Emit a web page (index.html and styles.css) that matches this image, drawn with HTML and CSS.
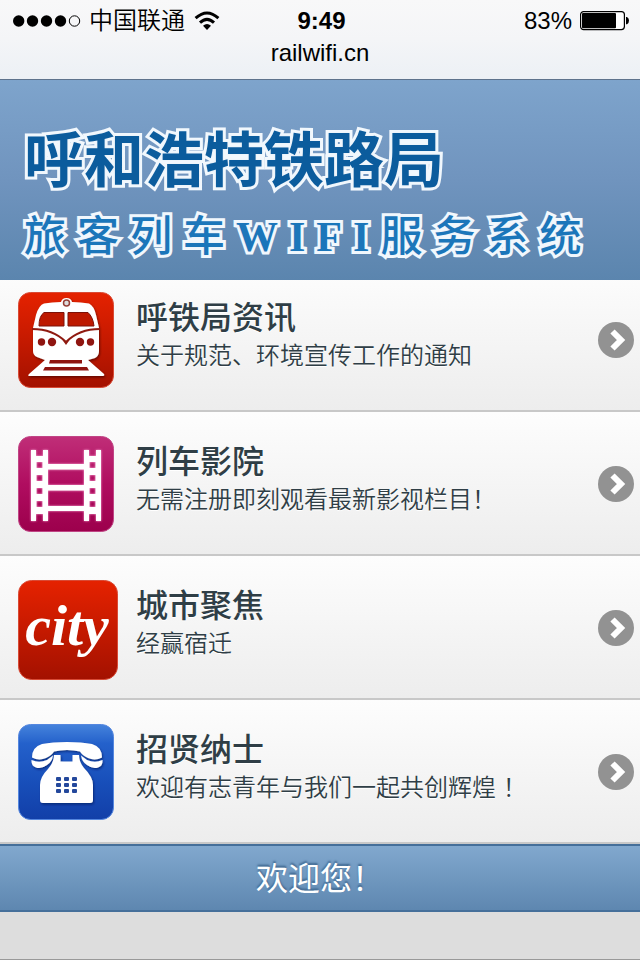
FILE: index.html
```
<!DOCTYPE html>
<html lang="zh-CN">
<head>
    <meta charset="UTF-8">
    <meta name="viewport" content="width=device-width, initial-scale=1.0">
    <title>呼和浩特铁路局</title>
    <link rel="stylesheet" href="styles.css">
</head>
<body>
    <div class="browser-bar">
        <div class="status">
            <div class="carrier">
                <svg class="signal" width="68" height="14" viewBox="0 0 68 14">
                    <circle cx="5.700" cy="7" r="5.700"/>
                    <circle cx="19.500" cy="7" r="5.700"/>
                    <circle cx="33.500" cy="7" r="5.700"/>
                    <circle cx="47.500" cy="7" r="5.700"/>
                    <circle cx="61.500" cy="7" r="5.200" fill="none" stroke="#000"/>
                </svg>
                <span>中国联通</span>
                <svg class="wifi" width="26" height="20" viewBox="0 0 26 20">
                    <path d="M1.6 7.2Q13-3.2 24.4 7.2M6 11.6Q13 5 20 11.6" fill="none" stroke="#000" stroke-width="3"/>
                    <path d="M9 14.8Q13 11.4 17 14.8L13 19Z"/>
                </svg>
            </div>
            <strong class="time">9:49</strong>
            <div class="power">
                <span>83%</span>
                <svg width="50" height="20" viewBox="0 0 50 20">
                    <rect x="0.6" y="0.6" width="43.8" height="18" rx="3" fill="#fff" stroke="#000" stroke-width="1.2"/>
                    <rect x="2" y="2" width="34" height="15.2" rx="1"/>
                    <path d="M46 6h1q2 1 2 3.6t-2 3.6h-1z"/>
                </svg>
            </div>
        </div>
        <div class="address">railwifi.cn</div>
    </div>

    <header class="banner">
        <h1>呼和浩特铁路局</h1>
        <p>旅客列车<b>WIFI</b>服务系统</p>
    </header>

    <ul class="menu">
        <li>
            <a href="#news">
                <span class="thumb">
                    <svg width="96" height="96" viewBox="0 0 96 96">
                        <defs>
                            <linearGradient id="red" x1="0" y1="0" x2="0" y2="1">
                                <stop offset="0" stop-color="#e52200"/>
                                <stop offset="0.35" stop-color="#cf1c00"/>
                                <stop offset="1" stop-color="#a31100"/>
                            </linearGradient>
                            <filter id="drop" x="-10%" y="-10%" width="125%" height="125%">
                                <feDropShadow dx="1" dy="1.5" stdDeviation="1" flood-color="#300" flood-opacity="0.6"/>
                            </filter>
                        </defs>
                        <rect x="0.5" y="0.5" width="95" height="95" rx="12" fill="url(#red)" stroke="#d94a35"/>
                        <g filter="url(#drop)">
                            <path fill="#fff" d="M26 11.500Q34 10 43 10Q44 6 48.500 6T54 10Q63 10 71 11.500Q76 14 78 23L81 36V59Q81 64 77 66L70 68L86 82Q87 84 84 84H12Q9 84 11 82L27 68L19 65Q15 63 15 59V36L18 23Q21 13 26 11.500Z"/>
                        </g>
                        <path fill="#bd1900" stroke="#7c1208" stroke-width="1" d="M26 20.500H46V34H21Q21 24 26 20.500ZM50 20.500H70Q75 25 76 34H50Z"/>
                        <circle cx="48.500" cy="11" r="3" fill="#ddd" stroke="#964038" stroke-width="1.500"/>
                        <path d="M14 37Q35 37 48 50Q61 37 82 37" fill="none" stroke="#8f1a10" stroke-width="2"/>
                        <path d="M43 46L48 53L53 46L48 50Z" fill="#8f1a10"/>
                        <g fill="#8f1510">
                            <circle cx="23.500" cy="50" r="3.700"/>
                            <circle cx="34" cy="50" r="4.200"/>
                            <circle cx="62" cy="50" r="4.200"/>
                            <circle cx="72.500" cy="50" r="3.700"/>
                            <path d="M32 68H64V71.500H31ZM27 75H69L71 78.500H25Z"/>
                        </g>
                    </svg>
                </span>
                <span class="text">
                    <span class="title">呼铁局资讯</span>
                    <span class="desc">关于规范、环境宣传工作的通知</span>
                </span>
                <svg class="arrow" width="36" height="36" viewBox="0 0 36 36">
                    <circle cx="18" cy="18" r="18"/>
                    <path d="M14.500 9.500L23 18L14.500 26.500"/>
                </svg>
            </a>
        </li>
        <li>
            <a href="#cinema">
                <span class="thumb">
                    <svg width="96" height="96" viewBox="0 0 96 96">
                        <defs>
                            <linearGradient id="pink" x1="0" y1="0" x2="0" y2="1">
                                <stop offset="0" stop-color="#c02e78"/>
                                <stop offset="0.5" stop-color="#b00d60"/>
                                <stop offset="1" stop-color="#9c004c"/>
                            </linearGradient>
                            <filter id="glow">
                                <feDropShadow dx="0" dy="0" stdDeviation="1.2" flood-color="#ffb0dd"/>
                            </filter>
                        </defs>
                        <rect x="0.5" y="0.5" width="95" height="95" rx="12" fill="url(#pink)" stroke="#c04585"/>
                        <g fill="#fff" filter="url(#glow)">
                            <path fill-rule="evenodd" d="M13 14H18V20H25V14H30V85H25V78H18V85H13ZM18.500 26V32H24.500V26ZM18.500 39V45H24.500V39ZM18.500 52V58H24.500V52ZM18.500 65V71H24.500V65Z"/>
                            <path fill-rule="evenodd" d="M66 14H71V20H78V14H83V85H78V78H71V85H66ZM71.500 26V32H77.500V26ZM71.500 39V45H77.500V39ZM71.500 52V58H77.500V52ZM71.500 65V71H77.500V65Z"/>
                            <path d="M29 28H67V33.500H29ZM29 49H67V54.500H29ZM29 70H67V75H29Z"/>
                        </g>
                    </svg>
                </span>
                <span class="text">
                    <span class="title">列车影院</span>
                    <span class="desc">无需注册即刻观看最新影视栏目！</span>
                </span>
                <svg class="arrow" width="36" height="36" viewBox="0 0 36 36">
                    <circle cx="18" cy="18" r="18"/>
                    <path d="M14.500 9.500L23 18L14.500 26.500"/>
                </svg>
            </a>
        </li>
        <li>
            <a href="#city">
                <span class="thumb">
                    <svg width="100" height="100" viewBox="0 0 100 100">
                        <rect x="0.5" y="0.5" width="99" height="99" rx="13" fill="url(#red)" stroke="#d94a35"/>
                        <text class="city" x="49" y="65" text-anchor="middle">city</text>
                    </svg>
                </span>
                <span class="text">
                    <span class="title">城市聚焦</span>
                    <span class="desc">经赢宿迁</span>
                </span>
                <svg class="arrow" width="36" height="36" viewBox="0 0 36 36">
                    <circle cx="18" cy="18" r="18"/>
                    <path d="M14.500 9.500L23 18L14.500 26.500"/>
                </svg>
            </a>
        </li>
        <li>
            <a href="#jobs">
                <span class="thumb">
                    <svg width="96" height="96" viewBox="0 0 96 96">
                        <defs>
                            <linearGradient id="blue" x1="0" y1="0" x2="0" y2="1">
                                <stop offset="0" stop-color="#4583dc"/>
                                <stop offset="0.2" stop-color="#2461cb"/>
                                <stop offset="0.6" stop-color="#184fba"/>
                                <stop offset="1" stop-color="#123fa8"/>
                            </linearGradient>
                            <filter id="phoneDrop" x="-10%" y="-10%" width="125%" height="125%">
                                <feDropShadow dx="1" dy="1.5" stdDeviation="1" flood-color="#001c60" flood-opacity="0.7"/>
                            </filter>
                        </defs>
                        <rect x="0.5" y="0.5" width="95" height="95" rx="12" fill="url(#blue)" stroke="#5587df"/>
                        <g fill="#fff" filter="url(#phoneDrop)">
                            <path d="M14 33.500Q14 23 24 20Q34 18 49 18T74 20Q84 23 84 33.500Q77 37 70 34Q64 31 62 27.500Q56 26 49 26T36 27.500Q34 31 28 34Q21 37 14 33.500Z"/>
                            <path d="M13.500 36Q21 39.500 29 36L35 31.500Q34 38 29 41Q23 45.500 18 43.500Q13 42 13.500 36ZM84.500 36Q77 39.500 69 36L63 31.500Q64 38 69 41Q75 45.500 80 43.500Q85 42 84.500 36Z"/>
                            <path d="M36 31H42.500V37.500H54.500V31H61Q61 38 66 44Q75 53 75 61V76Q75 79 72 79H25Q22 79 22 76V61Q22 53 30 45Q36 38 36 31Z"/>
                        </g>
                        <g fill="#24489c">
                            <rect x="38" y="53" width="5" height="4" rx="1"/>
                            <rect x="46" y="53" width="5" height="4" rx="1"/>
                            <rect x="54" y="53" width="5" height="4" rx="1"/>
                            <rect x="38" y="59" width="5" height="4" rx="1"/>
                            <rect x="46" y="59" width="5" height="4" rx="1"/>
                            <rect x="54" y="59" width="5" height="4" rx="1"/>
                            <rect x="38" y="65" width="5" height="4" rx="1"/>
                            <rect x="46" y="65" width="5" height="4" rx="1"/>
                            <rect x="54" y="65" width="5" height="4" rx="1"/>
                        </g>
                    </svg>
                </span>
                <span class="text">
                    <span class="title">招贤纳士</span>
                    <span class="desc">欢迎有志青年与我们一起共创辉煌 ！</span>
                </span>
                <svg class="arrow" width="36" height="36" viewBox="0 0 36 36">
                    <circle cx="18" cy="18" r="18"/>
                    <path d="M14.500 9.500L23 18L14.500 26.500"/>
                </svg>
            </a>
        </li>
    </ul>

    <footer class="footer">欢迎您！</footer>
</body>
</html>
```

FILE: styles.css
```
* {
    box-sizing: border-box;
}
html {
    height: 100%;
}
body {
    margin: 0;
    min-height: 100%;
    background: #ddd;
    border-bottom: 1px solid #999;
    color: #2f3e46;
    font-family: "Liberation Sans", "Noto Sans CJK SC", sans-serif;
}

/* browser bar */
.browser-bar {
    height: 80px;
    padding-top: 5px;
    background: linear-gradient(#f8f8f9, #f4f5f7 50%, #ecf0f5);
    border-bottom: 1px solid #5d728c;
    color: #000;
    font-size: 24px;
    line-height: 32px;
}
.status {
    display: grid;
    grid-template-columns: 1fr auto 1fr;
    padding: 0 10px 0 13px;
}
.carrier, .power {
    display: flex;
    align-items: center;
    font-weight: 350;
}
.signal {
    margin-right: 8px;
}
.wifi {
    margin-left: 9px;
}
.power {
    justify-content: flex-end;
    gap: 8px;
}
.time {
    text-align: center;
}
.address {
    text-align: center;
}

.banner {
    position: relative;
    z-index: 1;
    height: 200px;
    padding: 47px 24px 0;
    background: linear-gradient(#7ea4cc, #7094be 50%, #5b85ae);
    white-space: nowrap;
}
.banner h1, .banner p {
    margin: 0;
    -webkit-text-stroke: 6px #f2f8fd;
    paint-order: stroke fill;
    stroke-linejoin: round;
    text-shadow: 0 0 2px #dfeaf5;
}
.banner h1 {
    color: #0b5c9d;
    font-size: 60px;
    line-height: 70px;
}
.banner p {
    padding-top: 10px;
    color: #1b76ba;
    font-family: "Liberation Serif", "Noto Sans CJK SC", serif;
    font-size: 42px;
    font-weight: 500;
    letter-spacing: 11px;
    line-height: 60px;
}

.menu {
    margin: -12px 0 0;
    padding: 0;
    list-style: none;
}
.menu a {
    display: flex;
    align-items: flex-start;
    height: 144px;
    padding: 0 6px 0 18px;
    background: linear-gradient(#fdfdfd, #ededed);
    border-bottom: 2px solid #c8c8c8;
    color: inherit;
    text-decoration: none;
    text-shadow: 0 1px 0 #fff;
}
.thumb {
    width: 118px;
    padding-top: 24px;
}
.thumb svg {
    display: block;
}
.text {
    flex: 1;
    padding-top: 30px;
}
.title, .desc {
    display: block;
}
.title {
    font-size: 32px;
    font-weight: 500;
    line-height: 40px;
}
.desc {
    font-size: 24px;
    font-weight: 350;
    line-height: 36px;
}
.city {
    fill: #fff;
    font-family: "Liberation Serif", serif;
    font-size: 58px;
    font-style: italic;
    font-weight: bold;
    text-shadow: none;
}
.arrow {
    margin-top: 54px;
}
.arrow circle {
    fill: #929292;
}
.arrow path {
    fill: none;
    stroke: #fff;
    stroke-width: 6;
}

.footer {
    height: 68px;
    background: linear-gradient(#81a8ce, #5e87b0);
    border: solid #456f9a;
    border-width: 2px 0;
    color: #fff;
    font-size: 32px;
    line-height: 66px;
    text-align: center;
    text-shadow: 0 -2px 2px #3e6790;
}
```
